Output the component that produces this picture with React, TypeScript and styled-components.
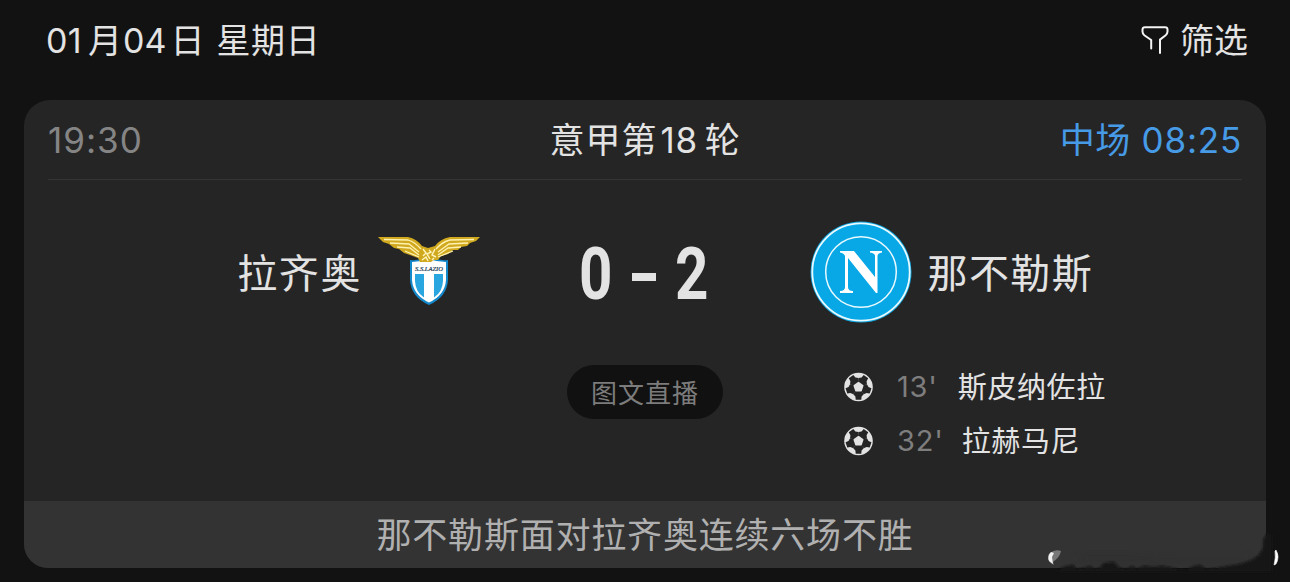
import styled, { createGlobalStyle } from "styled-components";

interface Goal {
  minute: string;
  player: string;
  gap: number;
}

const goals: Goal[] = [
  { minute: "13'", player: "斯皮纳佐拉", gap: 20 },
  { minute: "32'", player: "拉赫马尼", gap: 18 },
];

const GlobalStyle = createGlobalStyle`
  * {
    box-sizing: border-box;
  }
  body {
    margin: 0;
    background: #121212;
    font-family: Inter, "Noto Sans CJK SC", sans-serif;
    color: #e3e3e3;
  }
`;

const Page = styled.div`
  position: relative;
  width: 1290px;
  height: 582px;
  overflow: hidden;
  background: #121212;
`;

const TopBar = styled.header`
  display: flex;
  align-items: center;
  justify-content: space-between;
  height: 100px;
  padding: 0 42px 18px 46px;
`;

const Line = styled.div<{ $size?: number; $color?: string }>`
  display: flex;
  align-items: center;
  font-size: ${({ $size }) => $size ?? 35}px;
  line-height: 1.2;
  color: ${({ $color }) => $color ?? "#e3e3e3"};
  white-space: pre;
`;

const Han = styled.span<{ $space?: number }>`
  padding-bottom: 3px;
  font-family: "Noto Sans CJK SC", sans-serif;
  font-weight: 400;
  letter-spacing: ${({ $space }) => $space ?? 1}px;
`;

const Num = styled.span<{ $space?: number; $left?: number; $right?: number }>`
  font-family: Inter, sans-serif;
  font-weight: 400;
  letter-spacing: ${({ $space }) => $space ?? 0}px;
  margin-left: ${({ $left }) => $left ?? 0}px;
  margin-right: ${({ $right }) => $right ?? 0}px;
`;

const FilterButton = styled.button`
  display: flex;
  align-items: center;
  gap: 11px;
  padding: 0;
  border: none;
  background: none;
`;

const Card = styled.section`
  display: flex;
  flex-direction: column;
  width: 1242px;
  height: 468px;
  margin: 0 24px;
  border-radius: 26px 26px 0 24px;
  overflow: hidden;
  background: #252525;
`;

const CardHead = styled.div`
  display: grid;
  grid-template-columns: 1fr auto 1fr;
  align-items: center;
  height: 80px;
  margin: 0 24px;
  border-bottom: 1px solid #343434;
`;

const Status = styled.div`
  display: flex;
  justify-content: flex-end;
`;

const Teams = styled.div`
  display: grid;
  grid-template-columns: 457px 329px 1fr;
  align-items: center;
  height: 184px;
`;

const Team = styled.div<{ $home?: boolean }>`
  display: flex;
  align-items: center;
  justify-content: ${({ $home }) => ($home ? "flex-end" : "flex-start")};
  gap: ${({ $home }) => ($home ? 15 : 15.5)}px;
`;

const Score = styled.div`
  display: flex;
  align-items: center;
  justify-content: center;
  padding: 5px 4px 0 0;
  font: 700 72px/1 Roboto, sans-serif;
`;

const Digit = styled.span`
  display: block;
  transform: scaleX(0.81);
`;

const Dash = styled.span`
  width: 24px;
  height: 8px;
  margin: 5px 15px 0 16px;
  background: #e3e3e3;
`;

const Details = styled.div`
  display: grid;
  grid-template-columns: 543px 156px 1fr;
  align-items: start;
  flex: 1;
`;

const LivePill = styled.button`
  grid-column: 2;
  display: flex;
  align-items: center;
  justify-content: center;
  height: 54px;
  margin-top: 1px;
  padding: 2px 0 0;
  border: none;
  border-radius: 27px;
  background: #111;
`;

const GoalList = styled.ul`
  margin: -4px 0 0;
  padding: 0 0 0 121px;
  list-style: none;
`;

const GoalRow = styled.li`
  display: flex;
  align-items: center;
  height: 54px;
`;

const Footer = styled.footer`
  display: flex;
  align-items: center;
  justify-content: center;
  height: 67px;
  background: #333;
`;

const Smudge = styled.svg`
  position: absolute;
  left: 1040px;
  top: 522px;
`;

const FilterIcon = () => (
  <svg width="28" height="30" viewBox="0 0 28 30" fill="none" stroke="#f4f4f4" strokeWidth="2" strokeLinecap="round" strokeLinejoin="round">
    <path d="M10.2 22.500V14L3.300 9.200Q1.500 7.900 1.500 5.600V3.600Q1.500 1.200 4 1.200H24Q26.500 1.200 26.500 3.600V5.600Q26.500 7.900 24.700 9.200L19 13.600V27" />
  </svg>
);

const Ball = () => (
  <svg width="29" height="30" viewBox="0.5 0 29 30">
    <circle cx="15" cy="15" r="14.3" fill="#e3e3e3" />
    {[0, 72, 144, 216, 288].map((angle) => (
      <path key={angle} d="M15 14L9.800 22.200L11.900 24.500L12.200 27.700H17.800L18.100 24.500L20.200 22.200Z" fill="#252525" transform={`rotate(${angle} 15 15)`} />
    ))}
    <path d="M15 10.700L19.200 13.700L17.600 18.600H12.400L10.800 13.700Z" fill="#e3e3e3" stroke="#e3e3e3" strokeWidth="1.600" strokeLinejoin="round" />
  </svg>
);

const LazioCrest = () => (
  <svg width="104" height="72" viewBox="0 0 104 72">
    <path d="M33 24Q43 25 52 21Q61 25 71 24V44Q70 61 52 69Q34 61 33 44Z" fill="#1388cb" />
    <path d="M35 26Q44 26 52 23Q60 26 69 26V44Q68 59 52 66.500Q36 59 35 44Z" fill="#fff" />
    <path d="M38 38H47V61.500Q38.500 56 38 45ZM57 38H66V45Q65.500 56 57 61.500Z" fill="#29a5df" />
    <path d="M1 1H31Q40 3 45 10L51 12L58 10Q63 3 73 1H103L99 5L93 7L90 10L84 11L81 14L76 14L71 18L64 20L61 24H57L54 26H43L41 22L33 19L27 17L22 13L17 12L12 8L6 6Z" fill="#d0a91f" />
    <path d="M7 3.500L31 4Q38 6 44 13M13 7L32 8L42 16M20 11L33 12L42 19M28 15L42 21M97 3.500L73 4Q65 6 59 13M91 7L72 8L61 16M84 11L71 12L61 19M76 15L61 21" fill="none" stroke="#fff1b0" strokeWidth="1.300" />
    <path d="M46 13L49 17L46 20M52 14L54 16L50 18L53 23M58 13L55 19L59 21M45 24L49 21L51 25M55 24L57 22" fill="none" stroke="#fff4bd" strokeWidth="1.400" />
    <text x="52" y="35.300" textAnchor="middle" textLength="28" lengthAdjust="spacingAndGlyphs" fontFamily="Liberation Serif, serif" fontStyle="italic" fontSize="7" fill="#12344d" stroke="#12344d" strokeWidth="0.200">S.S.LAZIO</text>
  </svg>
);

const NapoliCrest = () => (
  <svg width="102" height="102" viewBox="0 0 102 102">
    <circle cx="51" cy="51" r="50.500" fill="#10a5df" />
    <circle cx="51" cy="51" r="48.700" fill="#08a7e6" stroke="#e9faff" strokeWidth="1.800" />
    <circle cx="51" cy="51" r="35.300" fill="none" stroke="#e9faff" strokeWidth="1.500" />
    <path d="M30 30H44L65 56V35Q65 32 60 31.500V30H72V31.500Q67.500 32 67.500 35V72H66L38 37V66Q38 70 43 70V72H30V70Q35 70 35 66V35Q34 32 30 31.500Z" fill="#fff" />
  </svg>
);

function App() {
  return (
    <Page>
      <GlobalStyle />
      <TopBar>
        <Line $size={34}>
          <Num $space={0.4} $right={6}>01</Num>
          <Han $space={0}>月</Han>
          <Num $space={0} $left={1} $right={4}>04</Num>
          <Han $space={0.4}>日</Han>
          <Num $left={2}> </Num>
          <Han $space={0.6}>星期日</Han>
        </Line>
        <FilterButton type="button">
          <FilterIcon />
          <Line $size={34}>
            <Han $space={0}>筛选</Han>
          </Line>
        </FilterButton>
      </TopBar>
      <Card>
        <CardHead>
          <Line $color="#858585">
            <Num $space={1}>19:30</Num>
          </Line>
          <Line>
            <Han>意甲第</Han>
            <Num $left={3} $right={7} $space={0.7}>18</Num>
            <Han $space={0.6}>轮</Han>
          </Line>
          <Status>
            <Line $color="#479be6">
              <Han $space={0.4}>中场</Han>
              <Num $left={11} $space={0.8}>08:25</Num>
            </Line>
          </Status>
        </CardHead>
        <Teams>
          <Team $home>
            <Line $size={40}>
              <Han $space={1.6}>拉齐奥</Han>
            </Line>
            <LazioCrest />
          </Team>
          <Score>
            <Digit>0</Digit>
            <Dash />
            <Digit>2</Digit>
          </Score>
          <Team>
            <NapoliCrest />
            <Line $size={40}>
              <Han $space={1.4}>那不勒斯</Han>
            </Line>
          </Team>
        </Teams>
        <Details>
          <LivePill type="button">
            <Line $size={26} $color="#7c7c7c">
              <Han $space={1}>图文直播</Han>
            </Line>
          </LivePill>
          <GoalList>
            {goals.map(({ minute, player, gap }) => (
              <GoalRow key={minute}>
                <Ball />
                <Line $size={29} $color="#7e7e7e">
                  <Num $left={24} $right={gap} $space={0.8}>{minute}</Num>
                </Line>
                <Line $size={29}>
                  <Han $space={0.6}>{player}</Han>
                </Line>
              </GoalRow>
            ))}
          </GoalList>
        </Details>
        <Footer>
          <Line $size={35} $color="#b0b0b0">
            <Han $space={0.8}>那不勒斯面对拉齐奥连续六场不胜</Han>
          </Line>
        </Footer>
      </Card>
      <Smudge width="250" height="60" viewBox="0 0 250 60">
        <defs>
          <filter id="soft" x="-20%" y="-50%" width="140%" height="200%">
            <feGaussianBlur stdDeviation="1.1" />
          </filter>
          <filter id="haze" x="-20%" y="-50%" width="140%" height="200%">
            <feGaussianBlur stdDeviation="5" />
          </filter>
          <filter id="edge" x="-50%" y="-50%" width="200%" height="200%">
            <feGaussianBlur stdDeviation="0.7" />
          </filter>
        </defs>
        <path d="M40 32H90L130 34H205V40H40Z" fill="#2a2a2a" opacity="0.4" filter="url(#haze)" />
        <path d="M18 48L26 44L33 43L36 47L44 46L50 44L54 47L60 46L64 41L74 40L80 46L86 47L92 44L97 47L104 44L114 45L122 44L134 46L140 48L148 47L154 44L160 43L166 47L176 46L188 44L200 42L212 38L219 33L223 26L223 18L227 12H232V50H18Z" fill="#121212" filter="url(#soft)" />
        <path d="M10 31Q15 27 21 29Q20 35 13 40L14 43Q8 40 8 35Q8 32 10 31Z" fill="#777" filter="url(#edge)" />
        <path d="M11 30Q7 34 9 39L13 42L12 35L14 31Z" fill="#f0f0f0" filter="url(#edge)" />
        <path d="M236 28Q240 35 236 42L234 43Q236 35 235 29Z" fill="#fff" stroke="#fff" strokeWidth="0.6" filter="url(#edge)" />
      </Smudge>
    </Page>
  );
}

export default App;
